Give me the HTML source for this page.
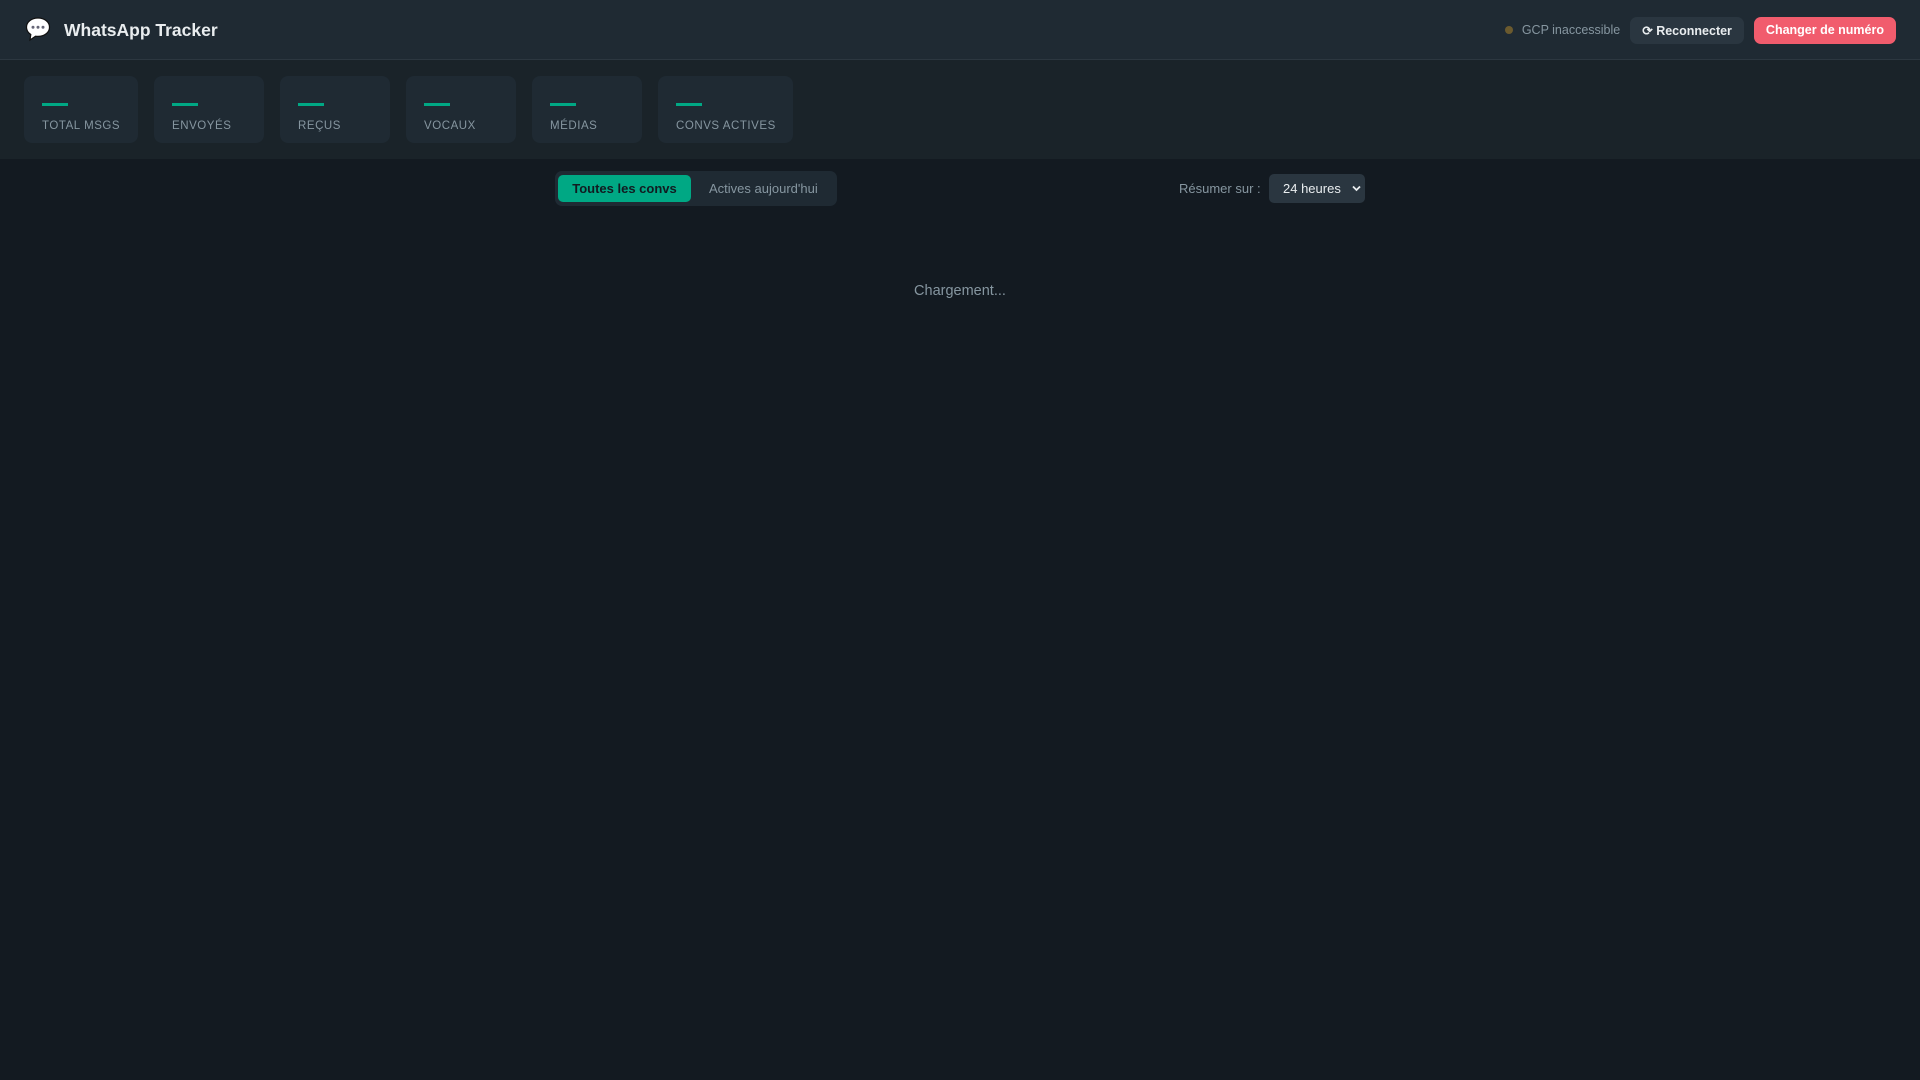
<!DOCTYPE html>
<html><head><meta charset="utf-8"><style>
*{box-sizing:border-box;margin:0;padding:0}
html,body{width:1920px;height:1080px;background:#131a21;font-family:"Liberation Sans",sans-serif;overflow:hidden}
.hdr{position:absolute;left:0;top:0;width:1920px;height:60px;background:#1f2a33;border-bottom:1px solid #2c3740}
.icon{position:absolute;left:25px;top:16px}
.title{position:absolute;left:64px;top:20px;font-size:17.5px;font-weight:bold;color:#e9edef}
.right{position:absolute;right:24px;top:16px;height:28px;display:flex;align-items:center}
.dot{width:8px;height:8px;border-radius:50%;background:#6b5a2e;margin-right:9px}
.gcp{font-size:12.5px;color:#8696a0;margin-right:10px}
.btn{height:27px;padding:0 12px;border-radius:7px;font-size:12.5px;font-weight:bold;color:#e9edef;display:flex;align-items:center}
.rec{background:#2a3640;margin-right:10px}
.chg{background:#f15c6d;color:#fff}
.stats{position:absolute;left:0;top:60px;width:1920px;height:99px;background:#1a2329}
.card{position:absolute;top:16px;height:67px;background:#1f2a33;border-radius:8px}
.card .dash{position:absolute;left:18px;top:27px;width:26px;height:3px;background:#00a884}
.card .lb{position:absolute;left:18px;top:44px;font-size:11.5px;color:#8696a0;letter-spacing:.55px;white-space:nowrap}
.tabs{position:absolute;left:555px;top:171px;width:282px;height:35px;background:#1f2a33;border-radius:7px}
.tab1{position:absolute;left:3px;top:4px;width:133px;height:27px;background:#00a884;border-radius:5px;color:#111b21;font-size:13px;font-weight:bold;text-align:center;line-height:27px}
.tab2{position:absolute;left:154px;top:4px;height:27px;line-height:27px;color:#8696a0;font-size:13px}
.res{position:absolute;left:1179px;top:181px;font-size:13px;color:#8696a0}
.sel{position:absolute;left:1269px;top:174px;width:96px;height:29px;background:#2a3640;border-radius:5px;color:#e9edef;font-size:13px;line-height:29px;padding-left:14px}
.sel svg{position:absolute;right:4px;top:11px}
.load{position:absolute;left:0;width:1920px;top:283px;text-align:center;font-size:14.5px;color:#8696a0}
</style></head><body>
<div class="hdr">
<svg class="icon" width="26" height="26" viewBox="0 0 26 26"><path d="M13 2C6.5 2 1.5 6 1.5 11.2c0 3 1.7 5.6 4.3 7.3L5 24l5.5-3.8c.8.1 1.6.2 2.5.2 6.5 0 11.5-4 11.5-9.2S19.5 2 13 2z" fill="#fff" stroke="#111" stroke-width="1.2"/><circle cx="8" cy="11.3" r="1.5" fill="#667"/><circle cx="13" cy="11.3" r="1.5" fill="#667"/><circle cx="18" cy="11.3" r="1.5" fill="#667"/></svg>
<div class="title">WhatsApp Tracker</div>
<div class="right"><div class="dot"></div><div class="gcp">GCP inaccessible</div><div class="btn rec">⟳ Reconnecter</div><div class="btn chg">Changer de numéro</div></div>
</div>
<div class="stats">
<div class="card" style="left:24px;width:114px"><div class="dash"></div><div class="lb">TOTAL MSGS</div></div>
<div class="card" style="left:154px;width:110px"><div class="dash"></div><div class="lb">ENVOYÉS</div></div>
<div class="card" style="left:280px;width:110px"><div class="dash"></div><div class="lb">REÇUS</div></div>
<div class="card" style="left:406px;width:110px"><div class="dash"></div><div class="lb">VOCAUX</div></div>
<div class="card" style="left:532px;width:110px"><div class="dash"></div><div class="lb">MÉDIAS</div></div>
<div class="card" style="left:658px;width:135px"><div class="dash"></div><div class="lb">CONVS ACTIVES</div></div>
</div>
<div class="tabs"><div class="tab1">Toutes les convs</div><div class="tab2">Actives aujourd'hui</div></div>
<div class="res">Résumer sur :</div>
<div class="sel">24 heures<svg width="9" height="7" viewBox="0 0 9 7"><path d="M1 1.5l3.5 3.5 3.5-3.5" stroke="#e9edef" stroke-width="1.8" fill="none"/></svg></div>
<div class="load">Chargement...</div>
</body></html>
